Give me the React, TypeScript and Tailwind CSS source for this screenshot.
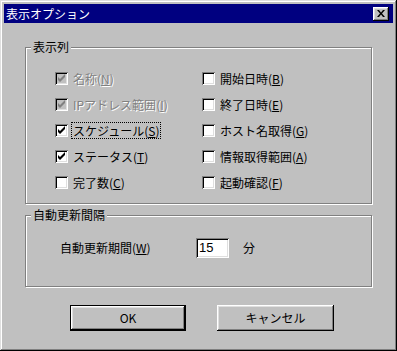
import React from "react";

type Item = { label: string; key: string; checked: boolean; disabled?: boolean; focused?: boolean };

const leftItems: Item[] = [
  { label: "名称", key: "N", checked: true, disabled: true },
  { label: "IPアドレス範囲", key: "I", checked: true, disabled: true },
  { label: "スケジュール", key: "S", checked: true, focused: true },
  { label: "ステータス", key: "T", checked: true },
  { label: "完了数", key: "C", checked: false },
];

const rightItems: Item[] = [
  { label: "開始日時", key: "B", checked: false },
  { label: "終了日時", key: "E", checked: false },
  { label: "ホスト名取得", key: "G", checked: false },
  { label: "情報取得範囲", key: "A", checked: false },
  { label: "起動確認", key: "F", checked: false },
];

function CheckBox({ checked, disabled }: { checked: boolean; disabled?: boolean }) {
  return (
    <span
      className={`relative inline-block w-[13px] h-[13px] shrink-0 ${
        disabled ? "bg-[#c0c0c0]" : "bg-white"
      } shadow-[inset_1px_1px_0_#808080,inset_-1px_-1px_0_#fff,inset_2px_2px_0_#000,inset_-2px_-2px_0_#dfdfdf]`}
    >
      {checked && (
        <svg className="absolute left-0 top-0" width="13" height="13" viewBox="0 0 13 13">
          <path
            d="M3 5 L3 8 L5 10 L10 5 L10 2 L5 7 Z"
            fill={disabled ? "#808080" : "#000"}
          />
        </svg>
      )}
    </span>
  );
}

function CheckRow({ item }: { item: Item }) {
  return (
    <div className="h-[26px] flex items-center">
      <CheckBox checked={item.checked} disabled={item.disabled} />
      <span
        className={`ml-[3px] px-[1px] leading-[15px] border border-dotted ${
          item.focused ? "border-black" : "border-transparent"
        } ${item.disabled ? "text-[#808080] [text-shadow:1px_1px_0_#fff]" : "text-black"}`}
      >
        {item.label}(<span className="underline">{item.key}</span>)
      </span>
    </div>
  );
}

function GroupBox({ title, className, children }: { title: string; className: string; children: React.ReactNode }) {
  return (
    <div
      className={`relative border border-[#808080] shadow-[inset_1px_1px_0_#fff,1px_1px_0_#fff] ${className}`}
    >
      <span className="absolute -top-[9px] left-[5px] bg-[#c0c0c0] px-[2px] leading-[16px]">{title}</span>
      {children}
    </div>
  );
}

const raised =
  "shadow-[inset_-1px_-1px_0_#000,inset_1px_1px_0_#fff,inset_-2px_-2px_0_#808080,inset_2px_2px_0_#dfdfdf]";

export default function App() {
  return (
    <div className="w-[397px] h-[351px] bg-[#c0c0c0] p-[4px] text-[12px] text-black font-['MS_UI_Gothic','Noto_Sans_CJK_JP',sans-serif] shadow-[inset_-1px_-1px_0_#000,inset_1px_1px_0_#dfdfdf,inset_-2px_-2px_0_#808080,inset_2px_2px_0_#fff]">
      {/* Title bar */}
      <div className="h-[19px] bg-[#000080] flex items-center justify-between pl-[2px] pr-[4px]">
        <span className="text-white text-[12px] leading-[14px]">表示オプション</span>
        <button className={`w-[16px] h-[14px] bg-[#c0c0c0] flex items-center justify-center ${raised}`}>
          <svg width="8" height="7" viewBox="0 0 8 7">
            <path d="M0 0 H2 L4 2.5 L6 0 H8 L5 3.5 L8 7 H6 L4 4.5 L2 7 H0 L3 3.5 Z" fill="#000" />
          </svg>
        </button>
      </div>

      <div className="px-[21px]">
        <GroupBox title="表示列" className="mt-[24px] h-[157px]">
          <div className="flex pl-[29px] pt-[17px]">
            <div className="w-[147px]">
              {leftItems.map((it) => (
                <CheckRow key={it.key} item={it} />
              ))}
            </div>
            <div>
              {rightItems.map((it) => (
                <CheckRow key={it.key} item={it} />
              ))}
            </div>
          </div>
        </GroupBox>

        <GroupBox title="自動更新間隔" className="mt-[11px] h-[72px]">
          <div className="flex items-center pl-[34px] pt-[22px]">
            <span className="w-[136px]">
              自動更新期間(<span className="underline">W</span>)
            </span>
            <div className="w-[33px] h-[20px] bg-white flex items-center pl-[3px] text-[13px] font-['Liberation_Sans',sans-serif] shadow-[inset_1px_1px_0_#808080,inset_-1px_-1px_0_#fff,inset_2px_2px_0_#000,inset_-2px_-2px_0_#dfdfdf]">
              15
            </div>
            <span className="ml-[14px]">分</span>
          </div>
        </GroupBox>
      </div>

      {/* Buttons */}
      <div className="flex pl-[66px] mt-[18px] gap-[31px]">
        <button className="w-[116px] h-[26px] border border-black bg-[#c0c0c0] p-0">
          <div className={`w-full h-full flex items-center justify-center ${raised}`}>OK</div>
        </button>
        <button className={`w-[117px] h-[26px] bg-[#c0c0c0] flex items-center justify-center ${raised}`}>
          キャンセル
        </button>
      </div>
    </div>
  );
}
